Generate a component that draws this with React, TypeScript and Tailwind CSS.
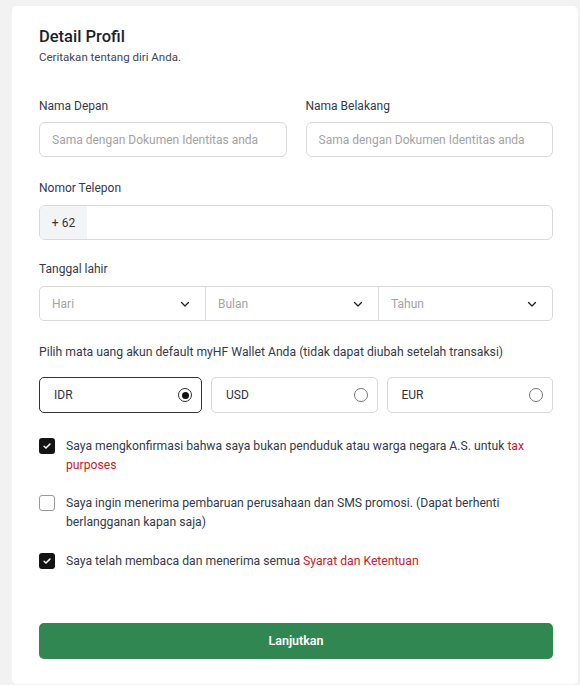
import React from "react";

const Chevron = () => (
  <svg width="12" height="12" viewBox="0 0 24 24" fill="none" stroke="#222" strokeWidth="2.6" strokeLinecap="round" strokeLinejoin="round">
    <path d="M5 9l7 7 7-7" />
  </svg>
);

const Check = ({ checked }: { checked: boolean }) =>
  checked ? (
    <span className="flex h-[16px] w-[16px] shrink-0 items-center justify-center rounded-[3px] bg-[#141414]">
      <svg width="10" height="10" viewBox="0 0 24 24" fill="none" stroke="#fff" strokeWidth="3.6" strokeLinecap="round" strokeLinejoin="round">
        <path d="M5 12.5l4.5 4.5L19 7.5" />
      </svg>
    </span>
  ) : (
    <span className="block h-[16px] w-[16px] shrink-0 rounded-[3px] border border-[#9a9a9a] bg-white" />
  );

const Radio = ({ label, selected, w }: { label: string; selected?: boolean; w: string }) => (
  <div
    className={
      "flex h-[36px] items-center justify-between rounded-[5px] pl-[14px] pr-[9px] " +
      w +
      (selected ? " border border-[#333]" : " border border-[#d9d9d9]")
    }
  >
    <span className="text-[12px] text-[#2f3441]">{label}</span>
    {selected ? (
      <span className="flex h-[14px] w-[14px] items-center justify-center rounded-full border border-[#333]">
        <span className="h-[7px] w-[7px] rounded-full bg-[#111]" />
      </span>
    ) : (
      <span className="h-[14px] w-[14px] rounded-full border border-[#777]" />
    )}
  </div>
);

export default function App() {
  return (
    <div className="min-h-[685px] bg-[#f2f2f2] pl-[12px] pr-[2px] pt-[6px]" style={{ fontFamily: "Roboto, 'Liberation Sans', sans-serif" }}>
      <div className="rounded-[5px] bg-white pb-[25px] pl-[27px] pr-[25px] pt-[19px]">
        <h1 className="text-[16.5px] font-medium leading-6 text-[#1b1f2e]">Detail Profil</h1>
        <p className="text-[11.5px] leading-4 text-[#3f4452]">Ceritakan tentang diri Anda.</p>

        <div className="mt-[31px] grid grid-cols-2 gap-[19px]">
          <div>
            <label className="block text-[12px] leading-5 text-[#353a48]">Nama Depan</label>
            <div className="mt-[6px] flex h-[35px] items-center whitespace-nowrap rounded-[6px] border border-[#d9d9d9] px-[12px] text-[12px] text-[#a3a3a3]">
              Sama dengan Dokumen Identitas anda
            </div>
          </div>
          <div>
            <label className="block text-[12px] leading-5 text-[#353a48]">Nama Belakang</label>
            <div className="mt-[6px] flex h-[35px] items-center whitespace-nowrap rounded-[6px] border border-[#d9d9d9] px-[12px] text-[12px] text-[#a3a3a3]">
              Sama dengan Dokumen Identitas anda
            </div>
          </div>
        </div>

        <label className="mt-[21px] block text-[12px] leading-5 text-[#353a48]">Nomor Telepon</label>
        <div className="mt-[7px] flex h-[35px] overflow-hidden rounded-[6px] border border-[#d9d9d9]">
          <div className="flex w-[47px] items-center justify-center bg-[#f3f4f6] text-[12px] text-[#2f3441]">+ 62</div>
          <div className="flex-1" />
        </div>

        <label className="mt-[19px] block text-[12px] leading-5 text-[#353a48]">Tanggal lahir</label>
        <div className="mt-[7px] flex h-[35px] rounded-[5px] border border-[#d9d9d9]">
          <div className="flex w-[165px] items-center justify-between pl-[12px] pr-[14px]">
            <span className="text-[12px] text-[#a3a3a3]">Hari</span>
            <Chevron />
          </div>
          <div className="flex w-[173px] items-center justify-between border-l border-[#d9d9d9] pl-[12px] pr-[14px]">
            <span className="text-[12px] text-[#a3a3a3]">Bulan</span>
            <Chevron />
          </div>
          <div className="flex flex-1 items-center justify-between border-l border-[#d9d9d9] pl-[12px] pr-[14px]">
            <span className="text-[12px] text-[#a3a3a3]">Tahun</span>
            <Chevron />
          </div>
        </div>

        <p className="mt-[21px] text-[12.2px] leading-5 text-[#353a48]">
          Pilih mata uang akun default myHF Wallet Anda (tidak dapat diubah setelah transaksi)
        </p>
        <div className="mt-[15px] flex gap-[9px]">
          <Radio label="IDR" selected w="w-[163px]" />
          <Radio label="USD" w="flex-1" />
          <Radio label="EUR" w="flex-1" />
        </div>

        <div className="mt-[24px] flex gap-[11px]">
          <div className="pt-[1px]">
            <Check checked />
          </div>
          <p className="text-[12.2px] leading-[19px] text-[#353a48]">
            Saya mengkonfirmasi bahwa saya bukan penduduk atau warga negara A.S. untuk{" "}
            <span className="text-[#c8202a]">tax purposes</span>
          </p>
        </div>

        <div className="mt-[19px] flex gap-[11px]">
          <div className="pt-[1px]">
            <Check checked={false} />
          </div>
          <p className="text-[12.2px] leading-[19px] text-[#353a48]">
            Saya ingin menerima pembaruan perusahaan dan SMS promosi. (Dapat berhenti berlangganan kapan saja)
          </p>
        </div>

        <div className="mt-[20px] flex gap-[11px]">
          <div className="pt-[1px]">
            <Check checked />
          </div>
          <p className="text-[12.2px] leading-[19px] text-[#353a48]">
            Saya telah membaca dan menerima semua <span className="text-[#c8202a]">Syarat dan Ketentuan</span>
          </p>
        </div>

        <button className="mt-[52px] flex h-[36px] w-full items-center justify-center rounded-[5px] bg-[#318752] text-[12.5px] font-semibold text-white">
          Lanjutkan
        </button>
      </div>
    </div>
  );
}
